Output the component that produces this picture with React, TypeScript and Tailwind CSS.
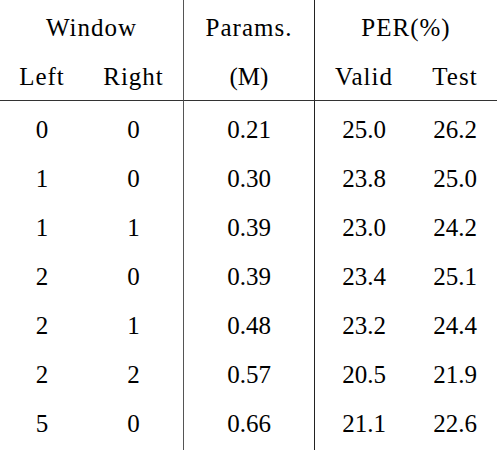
const rows = [
  ['0', '0', '0.21', '25.0', '26.2'],
  ['1', '0', '0.30', '23.8', '25.0'],
  ['1', '1', '0.39', '23.0', '24.2'],
  ['2', '0', '0.39', '23.4', '25.1'],
  ['2', '1', '0.48', '23.2', '24.4'],
  ['2', '2', '0.57', '20.5', '21.9'],
  ['5', '0', '0.66', '21.1', '22.6'],
]

const cell = 'flex h-[49px] items-center justify-center'
const mid = 'border-l border-r border-l-[#555] border-r-[#222]'

export default function App() {
  return (
    <div className="h-[452px] w-[498px] bg-white font-['Liberation_Serif','Times_New_Roman',serif] text-[25px] leading-none text-black">
      <div className="grid w-[497px] grid-cols-[84px_99px_132px_98px_84px]">
        {/* Header */}
        <div className={`col-span-2 ${cell} h-[52px] pt-[3px] tracking-[1px]`}>Window</div>
        <div className={`${cell} ${mid} h-[52px] pt-[3px] tracking-[1px]`}>Params.</div>
        <div className={`col-span-2 ${cell} h-[52px] pt-[3px] tracking-[1px]`}>PER(%)</div>

        <div className={`${cell} border-b border-b-[#333] tracking-[1px]`}>Left</div>
        <div className={`${cell} border-b border-b-[#333] tracking-[1px]`}>Right</div>
        <div className={`${cell} ${mid} border-b border-b-[#333]`}>(M)</div>
        <div className={`${cell} border-b border-b-[#333] tracking-[1px]`}>Valid</div>
        <div className={`${cell} border-b border-b-[#333] tracking-[1px]`}>Test</div>

        {/* Spacer under the rule */}
        <div className="h-[4px]" />
        <div className="h-[4px]" />
        <div className={`h-[4px] ${mid}`} />
        <div className="h-[4px]" />
        <div className="h-[4px]" />

        {/* Data */}
        {rows.map((r, i) => (
          <div key={i} className="contents">
            <div className={cell}>{r[0]}</div>
            <div className={cell}>{r[1]}</div>
            <div className={`${cell} ${mid}`}>{r[2]}</div>
            <div className={cell}>{r[3]}</div>
            <div className={cell}>{r[4]}</div>
          </div>
        ))}

        <div className="h-[2px]" />
        <div className="h-[2px]" />
        <div className={`h-[2px] ${mid}`} />
        <div className="h-[2px]" />
        <div className="h-[2px]" />
      </div>
    </div>
  )
}
